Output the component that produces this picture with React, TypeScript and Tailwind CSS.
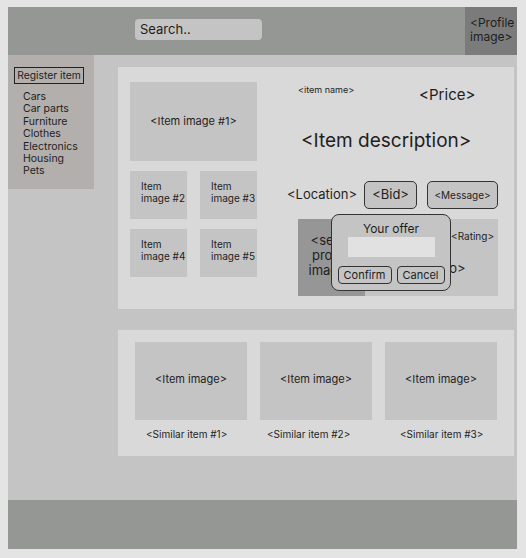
import React from "react";

const font = { fontFamily: "Inter, 'Noto Sans', sans-serif" };

export default function App() {
  const cats = ["Cars", "Car parts", "Furniture", "Clothes", "Electronics", "Housing", "Pets"];
  return (
    <div className="w-[526px] h-[558px] bg-[#e4e4e4] pt-[7px] pl-[8px] text-[#1e1e1e]" style={font}>
      <div className="w-[509px] flex flex-col bg-[#c4c4c4]">
        {/* Header */}
        <div className="h-[48px] bg-[#959794] flex">
          <div className="ml-[127px] mt-[12px] w-[127px] h-[21px] rounded-[4px] bg-[#c4c4c4] text-[13px] leading-[21px] pl-[5px]">
            Search..
          </div>
          <div className="ml-auto w-[52px] h-[48px] bg-[#7b7b7b] text-[12px] leading-[14px] pl-[5px] pt-[9px]">
            &lt;Profile image&gt;
          </div>
        </div>

        {/* Body */}
        <div className="flex h-[445px]">
          <div className="w-[86px] h-[134px] bg-[#b3afad] pt-[12px] pl-[6px]">
            <div className="w-[70px] h-[17px] border border-[#222] text-[10.3px] leading-[15px] text-center whitespace-nowrap">
              Register item
            </div>
            <div className="mt-[7px] pl-[9px] text-[10.5px] leading-[12.4px]">
              {cats.map((c) => (
                <div key={c}>{c}</div>
              ))}
            </div>
          </div>

          <div className="flex-1 pl-[24px] pr-[3px] pt-[12px] flex flex-col">
            {/* Item panel */}
            <div className="h-[242px] bg-[#d9d9d9] flex pl-[12px] pt-[15px]">
              <div className="w-[127px] flex flex-col">
                <div className="h-[79px] bg-[#c4c4c4] flex items-center justify-center text-[11px]">
                  &lt;Item image #1&gt;
                </div>
                <div className="mt-[10px] grid grid-cols-[57px_57px] gap-x-[13px] gap-y-[10px]">
                  {["#2", "#3", "#4", "#5"].map((n) => (
                    <div key={n} className="h-[48px] bg-[#c4c4c4] text-[10px] leading-[12px] pl-[11px] pt-[9px]">
                      Item<br />image {n}
                    </div>
                  ))}
                </div>
              </div>

              <div className="ml-[30px] w-[211px] flex flex-col">
                <div className="flex h-[22px] mt-[0px]">
                  <div className="ml-[11px] text-[9px] leading-[12px] mt-[2px]">&lt;item name&gt;</div>
                  <div className="ml-[65px] text-[15px] leading-[18px] mt-[4px]">&lt;Price&gt;</div>
                </div>
                <div className="mt-[25px] ml-[14px] text-[19px] leading-[24px]">&lt;Item description&gt;</div>
                <div className="mt-[28px] flex items-center h-[28px]">
                  <div className="text-[13px]">&lt;Location&gt;</div>
                  <div className="ml-[7px] w-[53px] h-[28px] rounded-[5px] border border-[#333] bg-[#c4c4c4] flex items-center justify-center text-[13px]">
                    &lt;Bid&gt;
                  </div>
                  <div className="ml-[10px] w-[71px] h-[28px] rounded-[5px] border border-[#333] bg-[#c4c4c4] flex items-center justify-center text-[10px]">
                    &lt;Message&gt;
                  </div>
                </div>
                <div className="relative mt-[10px] ml-[11px] w-[200px] h-[77px] flex">
                  <div className="w-[67px] bg-[#969696] text-[13px] leading-[15px] text-center pt-[14px] px-[2px]">
                    &lt;seller profile image&gt;
                  </div>
                  <div className="flex-1 bg-[#c4c4c4] relative">
                    <div className="absolute right-[4px] top-[10px] text-[10px]">&lt;Rating&gt;</div>
                    <div className="absolute left-[22px] top-[40px] text-[13px]">&lt;Seller info&gt;</div>
                  </div>
                  {/* Popup */}
                  <div className="absolute left-[33px] top-[-5px] w-[120px] h-[77px] rounded-[8px] border border-[#333] bg-[#c4c4c4] flex flex-col items-center">
                    <div className="text-[12px] leading-[14px] mt-[7px]">Your offer</div>
                    <div className="mt-[1px] w-[87px] h-[20px] bg-[#e1e1e1]" />
                    <div className="mt-[9px] flex gap-[5px]">
                      <div className="w-[54px] h-[18px] rounded-[4px] border border-[#333] bg-[#c4c4c4] text-[11px] leading-[16px] text-center">
                        Confirm
                      </div>
                      <div className="w-[48px] h-[18px] rounded-[4px] border border-[#333] bg-[#c4c4c4] text-[11px] leading-[16px] text-center">
                        Cancel
                      </div>
                    </div>
                  </div>
                </div>
              </div>
            </div>

            {/* Similar items */}
            <div className="mt-[21px] h-[126px] bg-[#d9d9d9] flex gap-[13px] pl-[17px] pt-[12px]">
              {[
                { n: "#1", m: "ml-[11px]" },
                { n: "#2", m: "ml-[7px]" },
                { n: "#3", m: "ml-[15px]" },
              ].map((s) => (
                <div key={s.n} className="w-[112px] flex flex-col">
                  <div className="h-[78px] bg-[#c4c4c4] flex items-center justify-center text-[11px] pb-[4px]">
                    &lt;Item image&gt;
                  </div>
                  <div className={`${s.m} mt-[8px] text-[10px] leading-[12px] whitespace-nowrap`}>
                    &lt;Similar item {s.n}&gt;
                  </div>
                </div>
              ))}
            </div>
          </div>
        </div>

        {/* Footer */}
        <div className="h-[49px] bg-[#959794]" />
      </div>
    </div>
  );
}
